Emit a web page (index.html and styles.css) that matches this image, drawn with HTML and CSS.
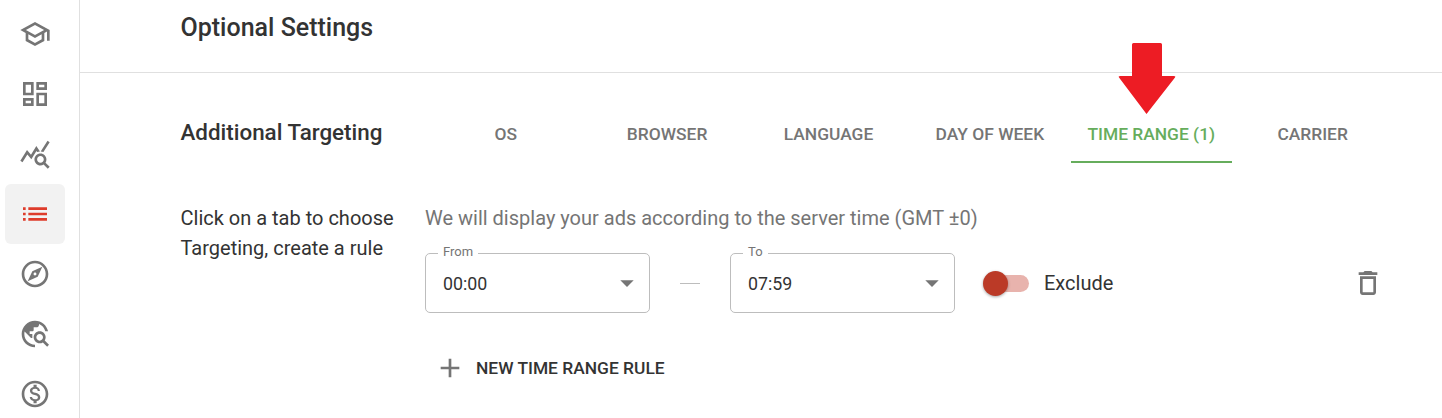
FILE: index.html
```html
<!DOCTYPE html>
<html lang="en">
<head>
  <meta charset="UTF-8">
  <meta name="viewport" content="width=device-width, initial-scale=1.0">
  <title>Optional Settings</title>
  <link rel="stylesheet" href="styles.css">
</head>
<body>
  <aside class="sidebar">
    <a class="nav-item"><svg class="icon" viewBox="0 0 24 24"><path d="M12 3L1 9l4 2.18v6L12 21l7-3.82v-6l2-1.09V17h2V9L12 3zm6.82 6L12 12.72 5.18 9 12 5.28 18.82 9zM17 15.99l-5 2.73-5-2.73v-3.72L12 15l5-2.73v3.72z"/></svg></a>
    <a class="nav-item"><svg class="icon" viewBox="0 0 24 24"><path d="M19 5v2h-4V5h4M9 5v6H5V5h4m10 8v6h-4v-6h4M9 17v2H5v-2h4M21 3h-8v6h8V3zM11 3H3v10h8V3zm10 8h-8v10h8V11zm-10 4H3v6h8v-6z"/></svg></a>
    <a class="nav-item"><svg class="icon" viewBox="0 0 24 24"><path d="M19.88 18.47c.44-.7.7-1.51.7-2.39 0-2.49-2.01-4.5-4.5-4.5s-4.5 2.01-4.5 4.5 2.01 4.5 4.49 4.5c.88 0 1.7-.26 2.39-.7L21.58 23 23 21.58l-3.12-3.11zm-3.8.11c-1.38 0-2.5-1.12-2.5-2.5s1.12-2.5 2.5-2.5 2.5 1.12 2.5 2.5-1.12 2.5-2.5 2.5zm-.36-8.5c-.74.02-1.45.18-2.1.45l-.55-.83-3.8 6.18-3.01-3.52-3.63 5.81L1 17l5-8 3 3.5L13 6l2.72 4.08zm2.59.5c-.64-.28-1.33-.45-2.05-.49L21.38 2 23 3.18l-4.69 7.4z"/></svg></a>
    <a class="nav-item active"><svg class="icon" viewBox="0 0 24 24"><path d="M3 13h2v-2H3v2zm0 4h2v-2H3v2zm0-8h2V7H3v2zm4 4h14v-2H7v2zm0 4h14v-2H7v2zM7 7v2h14V7H7z"/></svg></a>
    <a class="nav-item"><svg class="icon" viewBox="0 0 24 24"><path d="M12 2C6.48 2 2 6.48 2 12s4.48 10 10 10 10-4.48 10-10S17.52 2 12 2zm0 18c-4.41 0-8-3.59-8-8s3.59-8 8-8 8 3.59 8 8-3.59 8-8 8zm-5.5-2.5l7.51-3.49L17.5 6.5 9.99 9.99 6.5 17.5zm5.5-6.6c.61 0 1.1.49 1.1 1.1s-.49 1.1-1.1 1.1-1.1-.49-1.1-1.1.49-1.1 1.1-1.1z"/></svg></a>
    <a class="nav-item"><svg class="icon" viewBox="0 0 24 24"><path d="M19.3 16.9c.4-.7.7-1.5.7-2.4 0-2.5-2-4.5-4.5-4.5S11 12 11 14.5s2 4.5 4.5 4.5c.9 0 1.7-.3 2.4-.7l3.2 3.2 1.4-1.4-3.2-3.2zm-3.8.1c-1.4 0-2.5-1.1-2.5-2.5s1.1-2.5 2.5-2.5 2.5 1.1 2.5 2.5-1.1 2.5-2.5 2.5zM12 20v2C6.48 22 2 17.52 2 12S6.48 2 12 2c4.84 0 8.87 3.44 9.8 8h-2.07c-.64-2.46-2.4-4.47-4.73-5.41V5c0 1.1-.9 2-2 2h-2v2c0 .55-.45 1-1 1H8v2h2v3H9l-4.79-4.79C4.08 10.79 4 11.38 4 12c0 4.41 3.59 8 8 8z"/></svg></a>
    <a class="nav-item"><svg class="icon" viewBox="0 0 24 24"><path d="M12 2C6.48 2 2 6.48 2 12s4.48 10 10 10 10-4.48 10-10S17.52 2 12 2zm0 18c-4.41 0-8-3.59-8-8s3.59-8 8-8 8 3.59 8 8-3.59 8-8 8zm.31-8.86c-1.77-.45-2.34-.94-2.34-1.67 0-.84.79-1.43 2.1-1.43 1.38 0 1.9.66 1.94 1.64h1.71c-.05-1.34-.87-2.57-2.49-2.97V5H10.9v1.69c-1.51.32-2.72 1.3-2.72 2.81 0 1.79 1.49 2.69 3.66 3.21 1.95.46 2.34 1.15 2.34 1.87 0 .53-.39 1.39-2.1 1.39-1.6 0-2.23-.72-2.32-1.64H8.04c.1 1.7 1.36 2.66 2.86 2.97V19h2.34v-1.67c1.52-.29 2.72-1.16 2.73-2.77-.01-2.2-1.9-2.96-3.66-3.42z"/></svg></a>
  </aside>

  <main class="content">
    <header class="page-head">
      <h1>Optional Settings</h1>
    </header>

    <section class="targeting">
      <div class="targeting-row tabs-row">
        <h2>Additional Targeting</h2>
        <div class="tabs">
          <div class="tab">OS</div>
          <div class="tab">Browser</div>
          <div class="tab">Language</div>
          <div class="tab">Day of week</div>
          <div class="tab active">Time range (1)</div>
          <div class="tab">Carrier</div>
        </div>
      </div>

      <div class="targeting-row body-row">
        <p class="hint">Click on a tab to choose Targeting, create a rule</p>
        <div class="rules">
          <p class="note">We will display your ads according to the server time (GMT ±0)</p>
          <div class="rule">
            <div class="select">
              <span class="select-label">From</span>
              <span class="select-value">00:00</span>
              <svg class="icon caret" viewBox="0 0 24 24"><path d="M7 10l5 5 5-5z"/></svg>
            </div>
            <span class="dash"></span>
            <div class="select">
              <span class="select-label">To</span>
              <span class="select-value">07:59</span>
              <svg class="icon caret" viewBox="0 0 24 24"><path d="M7 10l5 5 5-5z"/></svg>
            </div>
            <div class="switch">
              <span class="switch-track"></span>
              <span class="switch-thumb"></span>
            </div>
            <span class="switch-label">Exclude</span>
            <svg class="icon trash" viewBox="0 0 24 24"><path d="M16 9v10H8V9h8m-1.5-6h-5l-1 1H5v2h14V4h-3.5l-1-1zM18 7H6v12c0 1.1.9 2 2 2h8c1.1 0 2-.9 2-2V7z"/></svg>
          </div>
          <div class="add-rule">
            <svg class="icon" viewBox="0 0 24 24"><path d="M19 13h-6v6h-2v-6H5v-2h6V5h2v6h6v2z"/></svg>
            <span>New time range rule</span>
          </div>
        </div>
      </div>
    </section>
  </main>

  <svg class="red-arrow" width="58" height="72" viewBox="0 0 58 72"><path d="M14 1.500Q14 0 15.500 0H42.500Q44 0 44 1.500V33H56Q58 33 57 34.500L28.500 71 1 34.500Q0 33 2 33H14z"/></svg>
</body>
</html>
```

FILE: styles.css
```css
html, body {
  height: 100%;
}
body {
  margin: 0;
  display: flex;
  overflow: hidden;
  background-color: #fff;
  color: #333;
  font-family: Roboto, "Liberation Sans", sans-serif;
}
p, h1, h2 {
  margin: 0;
}
.icon {
  display: block;
  width: 32px;
  height: 32px;
  fill: #757575;
  flex-shrink: 0;
}

.sidebar {
  width: 79px;
  flex-shrink: 0;
  padding-top: 4px;
  border-right: 1px solid #e0e0e0;
  box-sizing: content-box;
}
.nav-item {
  display: flex;
  align-items: center;
  justify-content: center;
  width: 60px;
  height: 60px;
  margin-left: 5px;
  border-radius: 6px;
}
.nav-item.active {
  background-color: #f2f2f2;
}
.nav-item.active .icon {
  fill: #de3c2b;
}

.content {
  flex: 1;
  min-width: 0;
}
.page-head {
  height: 72px;
  padding-left: 100.500px;
  border-bottom: 1px solid #e0e0e0;
}
.page-head h1 {
  font-size: 25px;
  font-weight: 500;
  line-height: 56px;
}

.targeting {
  padding: 32px 47px 0 100.500px;
}
.targeting-row {
  display: grid;
  grid-template-columns: 244.500px 1fr;
}
.tabs-row h2 {
  font-size: 22.400px;
  font-weight: 500;
  line-height: 54px;
}
.tabs {
  display: flex;
}
.tab {
  width: 161.400px;
  height: 56px;
  line-height: 58px;
  text-align: center;
  font-size: 17.400px;
  font-weight: 500;
  text-transform: uppercase;
  color: #757575;
  border-bottom: 2px solid transparent;
  white-space: nowrap;
}
.tab.active {
  color: #66ad5c;
  border-bottom-color: #66ad5c;
}

.body-row {
  margin-top: 40px;
}
.hint {
  font-size: 20px;
  line-height: 30px;
  width: 225px;
}
.note {
  font-size: 20px;
  line-height: 30px;
  color: #757575;
}

.rule {
  display: flex;
  align-items: center;
  margin-top: 20px;
  padding-right: 11px;
}
.select {
  position: relative;
  display: flex;
  align-items: center;
  justify-content: space-between;
  width: 225px;
  height: 60px;
  box-sizing: border-box;
  padding: 0 6px 0 17px;
  border: 1px solid #bdbdbd;
  border-radius: 5px;
}
.select-label {
  position: absolute;
  top: -10px;
  left: 12px;
  padding: 0 5px;
  background-color: #fff;
  color: #757575;
  font-size: 13px;
  line-height: 16px;
}
.select-value {
  font-size: 17.800px;
}
.dash {
  width: 20px;
  height: 1px;
  margin: 0 30px;
  background-color: #bdbdbd;
}
.switch {
  position: relative;
  width: 46px;
  height: 25px;
  margin-left: 28px;
}
.switch-track {
  display: block;
  width: 34px;
  height: 17px;
  margin: 4px 0 0 12px;
  border-radius: 9px;
  background-color: #e8b3ad;
}
.switch-thumb {
  position: absolute;
  top: 0;
  left: 0;
  width: 25px;
  height: 25px;
  border-radius: 50%;
  background-color: #bb3a27;
  box-shadow: 0 1px 3px rgba(0, 0, 0, 0.35);
}
.switch-label {
  margin-left: 15px;
  font-size: 20px;
}
.trash {
  margin-left: auto;
}

.add-rule {
  display: flex;
  align-items: center;
  gap: 10px;
  margin-top: 39px;
  padding-left: 9px;
  font-size: 17.400px;
  font-weight: 500;
  text-transform: uppercase;
}

.red-arrow {
  position: absolute;
  top: 43px;
  left: 1118px;
  fill: #ed1c24;
}
```
